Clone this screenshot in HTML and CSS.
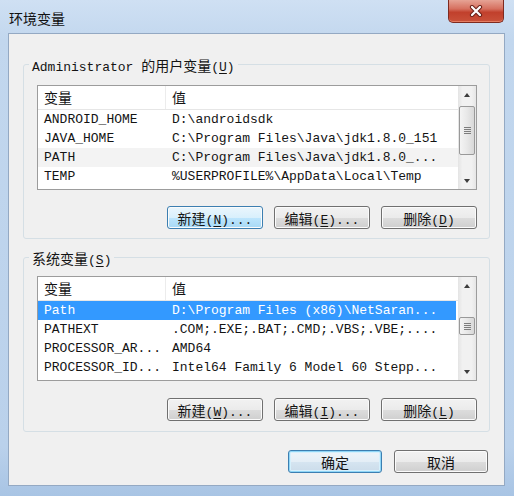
FILE: index.html
```html
<!DOCTYPE html>
<html lang="zh-CN">
  <head>
    <meta charset="UTF-8" />
    <meta name="viewport" content="width=device-width, initial-scale=1.0" />
    <title>环境变量</title>
    <link rel="stylesheet" href="styles.css">
  </head>
  <body>
    <div class="window">
      <div class="titlebar">
        <div class="title">环境变量</div>
        <div class="close">
          <svg width="14" height="12" viewBox="0 0 14 12">
            <path d="M3 2 L11 10 M11 2 L3 10" stroke="#6a2118" stroke-width="4.2" stroke-linecap="round" fill="none" />
            <path d="M3 2 L11 10 M11 2 L3 10" stroke="#fff" stroke-width="2.2" stroke-linecap="round" fill="none" />
          </svg>
        </div>
      </div>
      <div class="client">
        <div class="group">
          <div class="group-title">Administrator <span class="zh">的用户变量</span>(<u>U</u>)</div>
          <div class="list">
            <div class="table">
              <div class="head"><div class="zh">变量</div><div class="zh">值</div></div>
              <div class="row"><div>ANDROID_HOME</div><div>D:\androidsdk</div></div>
              <div class="row"><div>JAVA_HOME</div><div>C:\Program Files\Java\jdk1.8.0_151</div></div>
              <div class="row muted"><div>PATH</div><div>C:\Program Files\Java\jdk1.8.0_...</div></div>
              <div class="row"><div>TEMP</div><div>%USERPROFILE%\AppData\Local\Temp</div></div>
            </div>
            <div class="scrollbar">
              <div class="arrow up"></div>
              <div class="track"><div class="thumb thumb-user"></div></div>
              <div class="arrow down"></div>
            </div>
          </div>
          <div class="buttons">
            <button class="btn hover"><span class="zh">新建</span>(<u>N</u>)...</button>
            <button class="btn"><span class="zh">编辑</span>(<u>E</u>)...</button>
            <button class="btn"><span class="zh">删除</span>(<u>D</u>)</button>
          </div>
        </div>

        <div class="group">
          <div class="group-title"><span class="zh">系统变量</span>(<u>S</u>)</div>
          <div class="list">
            <div class="table">
              <div class="head"><div class="zh">变量</div><div class="zh">值</div></div>
              <div class="row selected"><div>Path</div><div>D:\Program Files (x86)\NetSaran...</div></div>
              <div class="row"><div>PATHEXT</div><div>.COM;.EXE;.BAT;.CMD;.VBS;.VBE;....</div></div>
              <div class="row"><div>PROCESSOR_AR...</div><div>AMD64</div></div>
              <div class="row"><div>PROCESSOR_ID...</div><div>Intel64 Family 6 Model 60 Stepp...</div></div>
            </div>
            <div class="scrollbar">
              <div class="arrow up"></div>
              <div class="track"><div class="thumb thumb-sys"></div></div>
              <div class="arrow down"></div>
            </div>
          </div>
          <div class="buttons">
            <button class="btn"><span class="zh">新建</span>(<u>W</u>)...</button>
            <button class="btn"><span class="zh">编辑</span>(<u>I</u>)...</button>
            <button class="btn"><span class="zh">删除</span>(<u>L</u>)</button>
          </div>
        </div>

        <div class="actions">
          <button class="btn default"><span class="zh">确定</span></button>
          <button class="btn"><span class="zh">取消</span></button>
        </div>
      </div>
    </div>
  </body>
</html>
```

FILE: styles.css
```css
* {
  box-sizing: border-box;
}
body {
  margin: 0;
  font-family: "Liberation Mono", "Noto Sans CJK SC", monospace;
  font-size: 13px;
  color: #141414;
}
.zh {
  font-family: "Noto Sans CJK SC", sans-serif;
  font-size: 14px;
}
u {
  text-decoration-thickness: 1px;
  text-underline-offset: 2px;
}
.window {
  width: 514px;
  height: 496px;
  display: flex;
  flex-direction: column;
  background: linear-gradient(180deg, #cfe0f3 0, #c2d7ee 40px, #bad1eb 90%, #a8c4e4 100%);
}
.titlebar {
  height: 33px;
  display: flex;
  justify-content: space-between;
  padding-left: 9px;
}
.title {
  padding-top: 10px;
  font-family: "Noto Sans CJK SC", sans-serif;
  font-size: 14px;
  line-height: 16px;
  color: #111;
}
.close {
  width: 56px;
  height: 23px;
  margin-right: 10px;
  display: flex;
  align-items: center;
  justify-content: center;
  border: 1px solid #7e2a1f;
  border-top: none;
  border-radius: 0 0 5px 5px;
  background: linear-gradient(180deg, #e6a395 0, #d6705f 40%, #c1402c 56%, #c9513a 100%);
  box-shadow: inset 0 -1px 0 rgba(255, 170, 140, 0.5);
}
.client {
  flex: 1;
  margin: 0 9px 10px 8px;
  border: 1px solid #94a9c3;
  background: #f0f0f0;
  padding: 30px 0 12px;
}
.group {
  margin: 0 14px;
  height: 175px;
  border: 1px solid #d5dfe5;
  border-radius: 3px;
  padding: 0 12px 12px 13px;
}
.group + .group {
  margin-top: 18px;
}
.group-title {
  width: fit-content;
  margin: -8px 0 0 -8px;
  padding: 0 3px;
  line-height: 16px;
  background: #f0f0f0;
  white-space: nowrap;
}
.list {
  margin-top: 9px;
  height: 105px;
  display: flex;
  border: 1px solid #9c9c9c;
  background: #fff;
}
.group + .group .list {
  margin-top: 7px;
}
.table {
  flex: 1;
  white-space: nowrap;
  overflow: hidden;
}
.head,
.row {
  display: grid;
  grid-template-columns: 128px 1fr;
}
.head {
  height: 24px;
  border-bottom: 1px solid #e6e6e6;
}
.head div {
  padding-left: 6px;
  line-height: 23px;
}
.head div:first-child {
  border-right: 1px solid #ececec;
}
.row {
  height: 19px;
  line-height: 19px;
}
.row div {
  padding-left: 6px;
  overflow: hidden;
}
.row.muted {
  background: #f3f3f3;
}
.row.selected {
  background: #3399ff;
  color: #fff;
  margin-right: 2px;
}
.scrollbar {
  width: 18px;
  display: flex;
  flex-direction: column;
  background: linear-gradient(90deg, #e4e4e4, #f1f1f1 25%, #f1f1f1 75%, #e6e6e6);
}
.arrow {
  height: 17px;
  display: flex;
  align-items: center;
  justify-content: center;
}
.arrow::before {
  content: "";
  border-left: 3px solid transparent;
  border-right: 3px solid transparent;
}
.up::before {
  border-bottom: 4px solid #3c3c3c;
}
.down::before {
  border-top: 4px solid #3c3c3c;
}
.track {
  flex: 1;
}
.thumb {
  margin: 0 1px;
  display: flex;
  align-items: center;
  justify-content: center;
  border: 1px solid #999;
  border-radius: 2px;
  background: linear-gradient(90deg, #f4f4f4, #e8e8e8 50%, #d8d8d8);
}
.thumb::after {
  content: "";
  width: 7px;
  height: 7px;
  background: repeating-linear-gradient(180deg, #7d7d7d 0 1px, transparent 1px 2px);
}
.thumb-user {
  margin-top: 3px;
  height: 49px;
}
.thumb-sys {
  margin-top: 23px;
  height: 18px;
}
.buttons {
  margin-top: 16px;
  display: flex;
  justify-content: flex-end;
  gap: 11px;
}
.group + .group .buttons {
  margin-top: 17px;
}
.btn {
  width: 96px;
  height: 23px;
  padding: 0;
  font: inherit;
  color: #141414;
  border: 1px solid #707070;
  border-radius: 3px;
  background: linear-gradient(180deg, #f2f2f2 0, #ebebeb 50%, #dddddd 50%, #cfcfcf 100%);
  box-shadow: inset 0 0 0 1px #fbfbfb;
  white-space: nowrap;
}
.btn.hover {
  border-color: #3c7fb1;
  background: linear-gradient(180deg, #eaf6fd 0, #d9f0fc 50%, #bee6fd 50%, #a7d9f5 100%);
}
.btn.default {
  border-color: #3c7fb1;
  background: linear-gradient(180deg, #eef5fa 0, #e4eef6 50%, #d6e5f1 50%, #cbdcea 100%);
  box-shadow: inset 0 0 0 1px #8fd6f7, inset 0 0 0 2px #d6f0fc;
}
.actions {
  margin-top: 18px;
  padding-right: 16px;
  display: flex;
  justify-content: flex-end;
  gap: 12px;
}
.actions .btn {
  width: 94px;
}
```
